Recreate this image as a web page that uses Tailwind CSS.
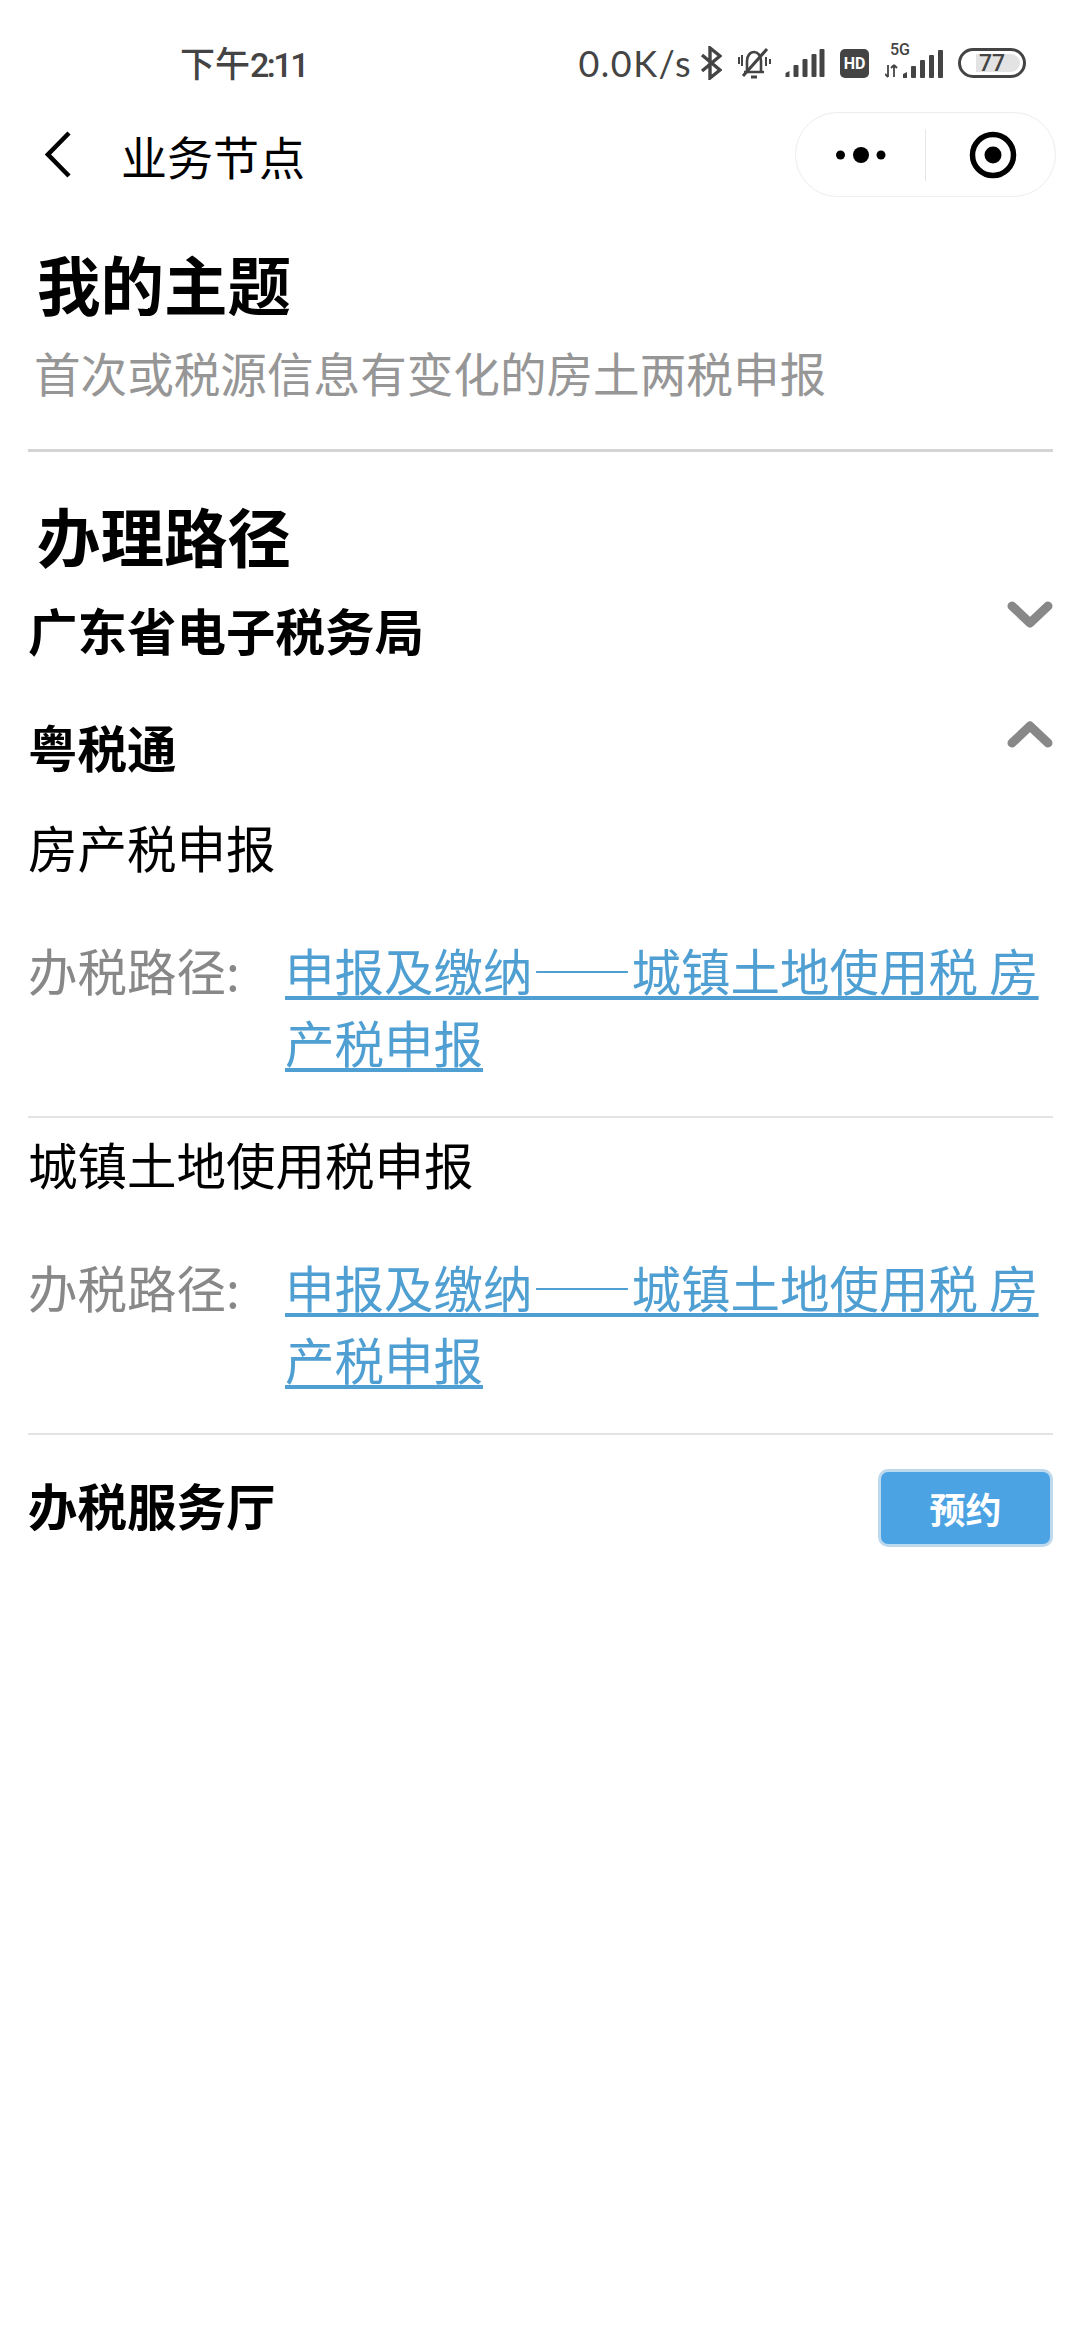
<!DOCTYPE html>
<html lang="zh-CN">
<head>
<meta charset="utf-8">
<script src="https://cdn.jsdelivr.net/npm/@tailwindcss/browser@4"></script>
</head>
<body class="bg-white">
<div class="w-[1080px] h-[2340px] bg-white overflow-hidden text-black font-['Noto_Sans_CJK_SC',sans-serif]">
  <!-- status bar -->
  <div class="h-[112px] pt-[14px] pl-[180px] pr-[54px] flex items-center justify-between text-[#444]">
    <span class="text-[35px] font-medium flex items-baseline">下午<span class="font-['Roboto',sans-serif] text-[34px] tracking-[-2.5px]">2:11</span></span>
    <div class="flex items-center h-[40px]">
      <span class="text-[36px] font-['Lato',sans-serif] tracking-[1.5px] mr-[8px]">0.0K/s</span>
      <svg class="w-[22px] h-[34px] mr-[15px]" viewBox="0 0 22 34" fill="none" stroke="#444" stroke-width="3.4"><path d="M2 9 L20 24 L10 32 V2 L20 10 L2 25"/></svg>
      <svg class="w-[34px] h-[34px] mr-[13px]" viewBox="0 0 34 34" fill="none" stroke="#444" stroke-width="2.6"><path d="M10 26 V15 C10 10 13 6 17 6 C21 6 24 10 24 15 V26 H7 M27 26 H24"/><path d="M6 30 L30 3" stroke-width="3"/><path d="M14 31 H20" stroke-width="3"/><path d="M2 11 V18 M5 9 V20 M29 11 V20 M33 13 V18" stroke-width="2"/></svg>
      <svg class="w-[41px] h-[30px] mr-[15px]" viewBox="0 0 40 30" fill="#444"><path d="M1 29 V25 L5 23 V29 Z"/><rect x="9" y="17" width="5" height="12" rx="1"/><rect x="18" y="11" width="5" height="18" rx="1"/><rect x="27" y="6" width="5" height="23" rx="1"/><rect x="35" y="1" width="5" height="28" rx="1"/></svg>
      <span class="w-[29px] h-[29px] mr-[16px] rounded-[5px] bg-[#444] text-white text-[16px] leading-[29px] font-['Roboto',sans-serif] font-bold text-center">HD</span>
      <div class="relative w-[58px] h-[34px] mr-[15px]">
        <span class="absolute left-[5px] top-[-5px] text-[16px] leading-[18px] font-['Roboto',sans-serif] font-medium">5G</span>
        <svg class="w-[58px] h-[34px]" viewBox="0 0 58 34" fill="none"><path d="M3 19 V31 M0 28 L3 31 M9 31 V19 M6 22 L9 19 M12 22 L9 19" stroke="#444" stroke-width="1.8"/><path d="M18 32 V28 L22 26 V32 Z" fill="#444"/><rect x="26" y="20" width="5" height="12" rx="1" fill="#444"/><rect x="35" y="14" width="5" height="18" rx="1" fill="#444"/><rect x="44" y="9" width="5" height="23" rx="1" fill="#444"/><rect x="53" y="4" width="5" height="28" rx="1" fill="#444"/></svg>
      </div>
      <div class="relative w-[68px] h-[30px] rounded-[15px] border-[3px] border-[#444] flex items-center justify-center">
        <span class="absolute left-[15px] right-[3px] top-[3px] bottom-[3px] bg-[#e3e3e3] rounded-r-[9px]"></span>
        <span class="relative text-[23px] leading-none font-['Roboto',sans-serif] font-medium pl-[0px]">77</span>
      </div>
    </div>
  </div>
  <!-- nav -->
  <div class="h-[85px] pl-[45px] pr-[24px] flex items-center justify-between">
    <div class="flex items-center">
      <svg class="w-[26px] h-[47px] mr-[50px]" viewBox="0 0 26 47" fill="none" stroke="#000" stroke-width="4.5"><path d="M24 2 L3 23.5 L24 45"/></svg>
      <span class="text-[46px] leading-[60px]">业务节点</span>
    </div>
    <div class="w-[261px] h-[85px] rounded-[43px] border border-[#ededed] flex items-center">
      <svg class="w-[129px] h-[20px]" viewBox="0 0 129 20" fill="#000"><circle cx="44.5" cy="10" r="4.5"/><circle cx="65" cy="10" r="8"/><circle cx="85" cy="10" r="4.5"/></svg>
      <span class="w-px h-[52px] bg-[#e6e6e6]"></span>
      <svg class="ml-[43px] w-[48px] h-[48px]" viewBox="0 0 48 48" fill="none"><circle cx="24" cy="24" r="20.5" stroke="#000" stroke-width="5.5"/><circle cx="24" cy="24" r="8.5" fill="#000"/></svg>
    </div>
  </div>
  <!-- content -->
  <div class="pl-[28px] pr-[27px]">
    <h1 class="mt-[45px] pl-[9px] text-[63.5px] leading-[80px] font-bold">我的主题</h1>
    <p class="mt-[20px] pl-[6px] text-[46.6px] leading-[60px] text-[#969696]">首次或税源信息有变化的房土两税申报</p>
    <div class="mt-[47px] h-[3px] bg-[#d4d4d4]"></div>
    <h2 class="mt-[42px] pl-[9px] text-[63.5px] leading-[80px] font-bold">办理路径</h2>

    <div class="mt-[20px] h-[72px] flex items-center justify-between">
      <span class="text-[49.5px] font-bold">广东省电子税务局</span>
      <svg class="w-[46px] h-[30px] mb-[28px]" viewBox="0 0 46 30" fill="none" stroke="#888" stroke-width="9" stroke-linecap="round" stroke-linejoin="round"><path d="M5 5 L23 22 L41 5"/></svg>
    </div>
    <div class="mt-[45px] h-[72px] flex items-center justify-between">
      <span class="text-[49.5px] font-bold">粤税通</span>
      <svg class="w-[46px] h-[30px] mb-[28px]" viewBox="0 0 46 30" fill="none" stroke="#888" stroke-width="9" stroke-linecap="round" stroke-linejoin="round"><path d="M5 25 L23 8 L41 25"/></svg>
    </div>

    <div class="mt-[28px] h-[72px] flex items-center text-[49.5px]">房产税申报</div>
    <div class="mt-[51px] flex text-[49.5px] leading-[72px]">
      <span class="w-[257px] shrink-0 text-[#888]">办税路径:</span>
      <a class="text-[#4f9fd2] underline underline-offset-[5px] decoration-[4px]">申报及缴纳——城镇土地使用税 房产税申报</a>
    </div>
    <div class="mt-[38px] h-[2px] bg-[#e4e4e4]"></div>

    <div class="mt-[10px] h-[72px] flex items-center text-[49.5px]">城镇土地使用税申报</div>
    <div class="mt-[51px] flex text-[49.5px] leading-[72px]">
      <span class="w-[257px] shrink-0 text-[#888]">办税路径:</span>
      <a class="text-[#4f9fd2] underline underline-offset-[5px] decoration-[4px]">申报及缴纳——城镇土地使用税 房产税申报</a>
    </div>
    <div class="mt-[38px] h-[2px] bg-[#e4e4e4]"></div>

    <div class="mt-[34px] flex items-start justify-between">
      <span class="text-[49.5px] leading-[72px] font-bold">办税服务厅</span>
      <span class="w-[175px] h-[78px] rounded-[10px] bg-[#4ba3e3] border-[3px] border-[#bcd9ee] text-white text-[36px] font-bold flex items-center justify-center">预约</span>
    </div>
  </div>
</div>
</body>
</html>
